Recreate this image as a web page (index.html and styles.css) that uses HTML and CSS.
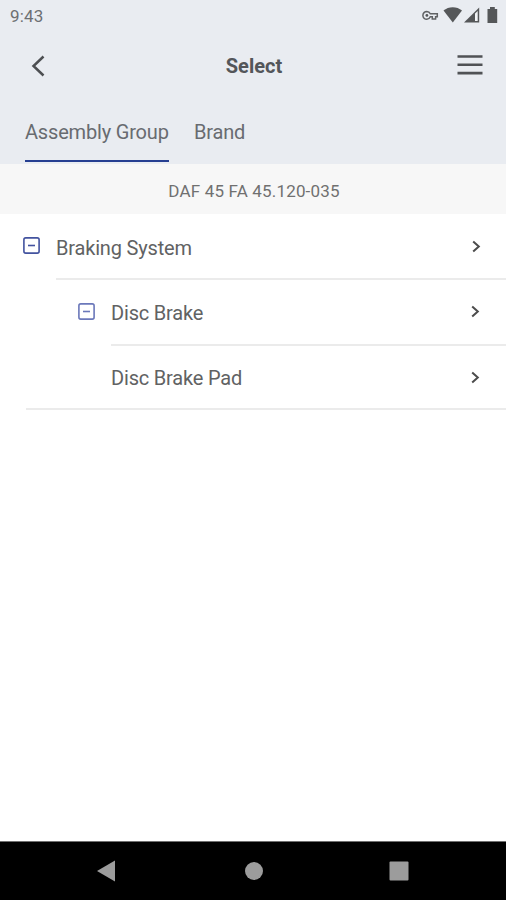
FILE: index.html
```html
<!DOCTYPE html>
<html lang="en">
<head>
<meta charset="utf-8">
<meta name="viewport" content="width=device-width, initial-scale=1">
<title>Select</title>
<link rel="stylesheet" href="styles.css">
</head>
<body>
<div class="screen">
  <header class="header">
    <div class="status">
      <span class="time">9:43</span>
      <svg class="status-icons" width="78" height="24" viewBox="0 0 78 24" fill="#555759">
        <path d="M4.800 11.500a3.900 3.900 0 1 0 0 7.800 3.900 3.900 0 0 0 3.500-2.500h2v2.200h3.300v-2.200h1.700v-3H8.300a3.900 3.900 0 0 0-3.500-2.300z" fill="none" stroke="#606264" stroke-width="1.500"/>
        <circle cx="4.900" cy="15.400" r="1.400"/>
        <path d="M21.500 10.500C26.500 6 35 6 40 10.500L30.800 22.500z"/>
        <path d="M42 22.500L57.200 7.500V22.500z"/>
        <path d="M53 13.500L55.700 11V21H53z" fill="#f2f4f6"/>
        <path d="M65.500 9h2.500V7h4.800v2h2.400v14h-9.700z"/>
      </svg>
    </div>
    <div class="titlebar">
      <svg class="back" width="14" height="22" viewBox="0 0 14 22" fill="none" stroke="#4d4f52" stroke-width="2.500"><path d="M12.500 1.500L2.500 11l10 9.500"/></svg>
      <h1 class="title">Select</h1>
      <svg class="menu" width="26" height="22" viewBox="0 0 26 22" fill="#505255"><path d="M.5 1.200H25.500V3.800H.5zM.5 9.500H25.500V12.100H.5zM.5 17.800H25.500V20.400H.5z"/></svg>
    </div>
    <nav class="tabs">
      <span class="tab active">Assembly Group</span>
      <span class="tab">Brand</span>
    </nav>
  </header>
  <div class="vehicle"><span>DAF 45 FA 45.120-035</span></div>
  <main class="tree">
    <div class="row level-one">
      <svg class="toggle" width="17" height="17" viewBox="0 0 17 17" fill="none" stroke="#43539f" stroke-width="1.600"><rect x=".9" y=".9" width="15.200" height="15.200" rx="1.800"/><path d="M5 8.500h7"/></svg>
      <div class="item"><span class="label">Braking System</span>
        <svg class="chevron" width="9" height="13" viewBox="0 0 9 13" fill="none" stroke="#4c4c4c" stroke-width="2"><path d="M1.200 1.500L6.800 6.500l-5.600 5"/></svg></div>
    </div>
    <div class="row level-two">
      <svg class="toggle" width="17" height="17" viewBox="0 0 17 17" fill="none" stroke="#6b78ba" stroke-width="1.600"><rect x=".9" y=".9" width="15.200" height="15.200" rx="1.800"/><path d="M5 8.500h7"/></svg>
      <div class="item"><span class="label">Disc Brake</span>
        <svg class="chevron" width="9" height="13" viewBox="0 0 9 13" fill="none" stroke="#4c4c4c" stroke-width="2"><path d="M1.200 1.500L6.800 6.500l-5.600 5"/></svg></div>
    </div>
    <div class="row level-three">
      <div class="item"><span class="label">Disc Brake Pad</span>
        <svg class="chevron" width="9" height="13" viewBox="0 0 9 13" fill="none" stroke="#4c4c4c" stroke-width="2"><path d="M1.200 1.500L6.800 6.500l-5.600 5"/></svg></div>
    </div>
  </main>
  <footer class="navigation">
    <svg width="18" height="22" viewBox="0 0 18 22" fill="#9c9c9c"><path d="M0 11L18 .5v21z"/></svg>
    <svg class="home" width="18" height="18" viewBox="0 0 18 18" fill="#9c9c9c"><circle cx="9" cy="9" r="9"/></svg>
    <svg width="20" height="20" viewBox="0 0 20 20" fill="#9c9c9c"><rect x=".5" y=".5" width="19" height="19" rx="1"/></svg>
  </footer>
</div>
</body>
</html>
```
FILE: styles.css
```css
* { box-sizing: border-box; }
body {
  margin: 0;
  background: #fff;
  color: #616263;
  font-family: Roboto, "Liberation Sans", sans-serif;
}
svg { display: block; flex: none; }
.screen { display: flex; flex-direction: column; height: 900px; overflow: hidden; }
.header { height: 164px; background: #e9ecf1; flex: none; }
.status { display: flex; justify-content: space-between; height: 32px; padding: 0 6px 0 10px; }
.time { font-size: 17px; line-height: 32px; color: #6d7073; letter-spacing: .2px; }
.titlebar {
  display: grid;
  grid-template-columns: 57px 1fr 63px;
  align-items: center;
  height: 66px;
  padding: 0 23px 0 31px;
}
.title {
  margin: 2px 0 0;
  color: #53565a;
  font-size: 20px;
  font-weight: 700;
  line-height: 24px;
  text-align: center;
}
.back { margin-top: 2px; }
.menu { justify-self: end; }
.tabs { display: flex; gap: 25px; height: 64px; padding-left: 25px; }
.tab {
  height: 64px;
  font-size: 20px;
  line-height: 68px;
  letter-spacing: -.18px;
  color: #686b70;
  white-space: nowrap;
}
.tab.active { width: 144px; border-bottom: 2px solid #263f91; }
.vehicle {
  height: 50px;
  flex: none;
  background: #f7f7f7;
  padding-left: 2px;
  color: #707070;
  font-size: 17px;
  letter-spacing: .17px;
  line-height: 54px;
  text-align: center;
}
.tree { flex: 1; }
.row { display: flex; }
.level-one { height: 66px; padding-left: 23px; }
.level-two { height: 66px; padding-left: 78px; }
.level-three { height: 64px; padding-left: 26px; }
.toggle { margin: 23px 16px 0 0; }
.item {
  display: flex;
  flex: 1;
  justify-content: space-between;
  padding-right: 25px;
  border-bottom: 2px solid #ebebeb;
}
.label { font-size: 20px; line-height: 67px; letter-spacing: -.18px; white-space: nowrap; }
.level-one .label { line-height: 68px; }
.level-three .item { padding-left: 85px; }
.level-three .label { line-height: 65px; }
.chevron { margin-top: 26px; }
.level-two .chevron, .level-three .chevron { margin-right: 1px; }
.level-two .chevron, .level-three .chevron { margin-top: 25px; }
.navigation {
  display: flex;
  align-items: center;
  justify-content: space-between;
  height: 59px;
  flex: none;
  padding: 0 97px;
  background: #000;
  border-top: 1px solid #707070;
}
.home { margin-left: 3px; }
```
